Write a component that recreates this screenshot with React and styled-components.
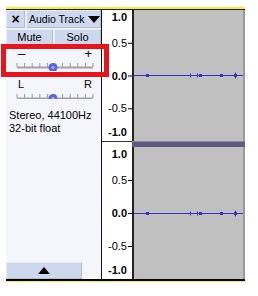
import React from "react";
import styled, { createGlobalStyle } from "styled-components";

const GlobalStyle = createGlobalStyle`
  html, body {
    margin: 0;
    padding: 0;
    background: #ffffff;
  }
  body {
    font-family: "Liberation Sans", Arial, sans-serif;
  }
`;

const Page = styled.div`
  position: relative;
  width: 258px;
  height: 296px;
  padding: 7px 0 0 6px;
  box-sizing: border-box;
  overflow: hidden;
`;

const Track = styled.div`
  width: 239px;
  border-top: 2px solid #f6f21e;
  border-bottom: 1px solid #f6f21e;
`;

const TrackBody = styled.div`
  display: flex;
  border-top: 1px solid #1a1a1a;
  border-bottom: 2px solid #000000;
  height: 269px;
`;

const Panel = styled.div`
  width: 95px;
  background: #f4f6fc;
  border-right: 1px solid #111111;
  display: flex;
  flex-direction: column;
  font-size: 11px;
  color: #000;
`;

const ButtonRow = styled.div`
  display: flex;
  gap: 1px;
  height: ${(p) => p.$h}px;
  margin-bottom: 1px;
`;

const PanelButton = styled.div`
  flex: ${(p) => (p.$w ? `0 0 ${p.$w}px` : "1")};
  display: flex;
  align-items: center;
  justify-content: ${(p) => p.$align || "center"};
  padding: ${(p) => p.$pad || "0"};
  box-sizing: border-box;
  background: #cdd8ef;
  border-top: 1px solid #e4ebf8;
  border-left: 1px solid #e4ebf8;
  border-right: 1px solid #b3bdd2;
  border-bottom: 1px solid #b3bdd2;
  font-size: ${(p) => p.$fs || 11}px;
  font-weight: ${(p) => (p.$bold ? 700 : 400)};
  white-space: nowrap;
`;

const Caret = styled.span`
  width: 0;
  height: 0;
  border-left: 6px solid transparent;
  border-right: 6px solid transparent;
  border-${(p) => (p.$up ? "bottom" : "top")}: 7px solid #000;
  margin-left: ${(p) => (p.$up ? 0 : 4)}px;
`;

const SliderBlock = styled.div`
  display: flex;
  flex-direction: column;
  height: ${(p) => p.$h}px;
  padding-top: ${(p) => p.$pt}px;
  box-sizing: border-box;
`;

const SliderLabels = styled.div`
  display: flex;
  justify-content: space-between;
  padding: 0 9px 0 12px;
  font-size: ${(p) => p.$fs}px;
  line-height: 11px;
  height: 11px;
`;

const Info = styled.div`
  padding: 10px 0 0 3px;
  line-height: 13px;
  font-size: 11px;
`;

const Spacer = styled.div`
  flex: 1;
`;

const CollapseRow = styled.div`
  display: flex;
  height: 17px;
`;

const Channels = styled.div`
  display: flex;
  flex-direction: column;
`;

const ChannelRow = styled.div`
  display: flex;
  height: ${(p) => p.$h}px;
`;

const Ruler = styled.div`
  width: 30px;
  background: #ffffff;
  border-top: ${(p) => (p.$line ? "1px solid #333" : "none")};
  box-sizing: border-box;
`;

const WaveBox = styled.div`
  width: 113px;
  box-sizing: border-box;
  background: #c0c0c0;
  border-left: 2px solid #2a2020;
  border-right: 2px solid #9a9a9a;
`;

const SeparatorBand = styled.div`
  flex: 1;
  background: #5b5e7e;
  border-top: 1px solid #8a8a9a;
`;

const RedMark = styled.div`
  position: absolute;
  left: 1px;
  top: 44px;
  width: 108px;
  height: 33px;
  box-sizing: border-box;
  border: 5px solid #e8141c;
  pointer-events: none;
`;

function SliderTrack({ thumb = 53 }) {
  const ticks = [];
  for (let i = 0; i <= 10; i++) ticks.push(11 + i * 7.6);
  return (
    <svg width="95" height="12" style={{ display: "block" }}>
      {ticks.map((x, i) => (
        <line key={i} x1={x} x2={x} y1="4" y2="8" stroke="#9a9a9a" strokeWidth="1" />
      ))}
      <line x1="11" x2="87" y1="8.5" y2="8.5" stroke="#a2a2a2" strokeWidth="2" />
      <circle cx={thumb - 6} cy="8.5" r="4.5" fill="#5563e6" />
      <circle cx={thumb - 6} cy="8.5" r="1.6" fill="#aab2f4" />
    </svg>
  );
}

function RulerScale({ h }) {
  const marks = [
    { y: 11, t: "1.0", bold: true, tick: false },
    { y: h * 0.25 + 4, t: "0.5", tick: true, ty: h * 0.25 },
    { y: h * 0.5 + 4, t: "0.0", bold: true, tick: true, ty: h * 0.5 },
    { y: h * 0.75 + 4, t: "-0.5", tick: true, ty: h * 0.75 },
    { y: h - 5, t: "-1.0", bold: true, tick: false },
  ];
  return (
    <svg width="30" height={h} style={{ display: "block" }}>
      {marks.map((m) => (
        <g key={m.t}>
          <text
            x="25"
            y={m.y}
            textAnchor="end"
            fontSize="11"
            fontWeight={m.bold ? 700 : 400}
            fontFamily="Liberation Sans, Arial, sans-serif"
            fill="#000"
          >
            {m.t}
          </text>
          {m.tick && (
            <line x1="26" x2="30" y1={m.ty + 0.5} y2={m.ty + 0.5} stroke="#000" strokeWidth="1" />
          )}
        </g>
      ))}
    </svg>
  );
}

function Wave({ h }) {
  const cy = Math.floor(h / 2) + 0.5;
  return (
    <svg width="109" height={h} style={{ display: "block" }}>
      <line x1="0" x2="109" y1={cy} y2={cy} stroke="#3434c8" strokeWidth="1" />
      <rect x="12" y={cy - 1.5} width="3" height="3" fill="#3434c8" />
      <line x1="56.5" x2="56.5" y1={cy - 2} y2={cy + 2} stroke="#3434c8" />
      <line x1="63.5" x2="63.5" y1={cy - 2} y2={cy + 2} stroke="#3434c8" />
      <rect x="65" y={cy - 1.5} width="3" height="3" fill="#3434c8" />
      <rect x="86" y={cy - 1.5} width="3" height="3" fill="#3434c8" />
      <line x1="101.5" x2="101.5" y1={cy - 3} y2={cy + 3} stroke="#3434c8" />
      <rect x="100" y={cy - 1.5} width="3" height="3" fill="#3434c8" />
    </svg>
  );
}

export default function App() {
  return (
    <>
      <GlobalStyle />
      <Page>
        <Track>
          <TrackBody>
            <Panel>
              <ButtonRow $h={18}>
                <PanelButton $w={19} $fs={14} $bold>×</PanelButton>
                <PanelButton $align="flex-start" $pad="0 0 0 2px" $fs={10.5}>
                  Audio Track
                  <Caret />
                </PanelButton>
              </ButtonRow>
              <ButtonRow $h={16}>
                <PanelButton>Mute</PanelButton>
                <PanelButton>Solo</PanelButton>
              </ButtonRow>
              <SliderBlock $h={31} $pt={2}>
                <SliderLabels $fs={13}>
                  <span>–</span>
                  <span>+</span>
                </SliderLabels>
                <SliderTrack thumb={53} />
              </SliderBlock>
              <SliderBlock $h={22} $pt={2}>
                <SliderLabels $fs={11}>
                  <span>L</span>
                  <span>R</span>
                </SliderLabels>
                <SliderTrack thumb={53} />
              </SliderBlock>
              <Info>
                Stereo, 44100Hz
                <br />
                32-bit float
              </Info>
              <Spacer />
              <CollapseRow>
                <PanelButton $w={76}>
                  <Caret $up />
                </PanelButton>
              </CollapseRow>
            </Panel>
            <Channels>
              <ChannelRow $h={131}>
                <Ruler>
                  <RulerScale h={131} />
                </Ruler>
                <WaveBox>
                  <Wave h={131} />
                </WaveBox>
              </ChannelRow>
              <ChannelRow $h={6}>
                <Ruler $line />
                <SeparatorBand />
              </ChannelRow>
              <ChannelRow $h={132}>
                <Ruler>
                  <RulerScale h={132} />
                </Ruler>
                <WaveBox>
                  <Wave h={132} />
                </WaveBox>
              </ChannelRow>
            </Channels>
          </TrackBody>
        </Track>
        <RedMark />
      </Page>
    </>
  );
}
